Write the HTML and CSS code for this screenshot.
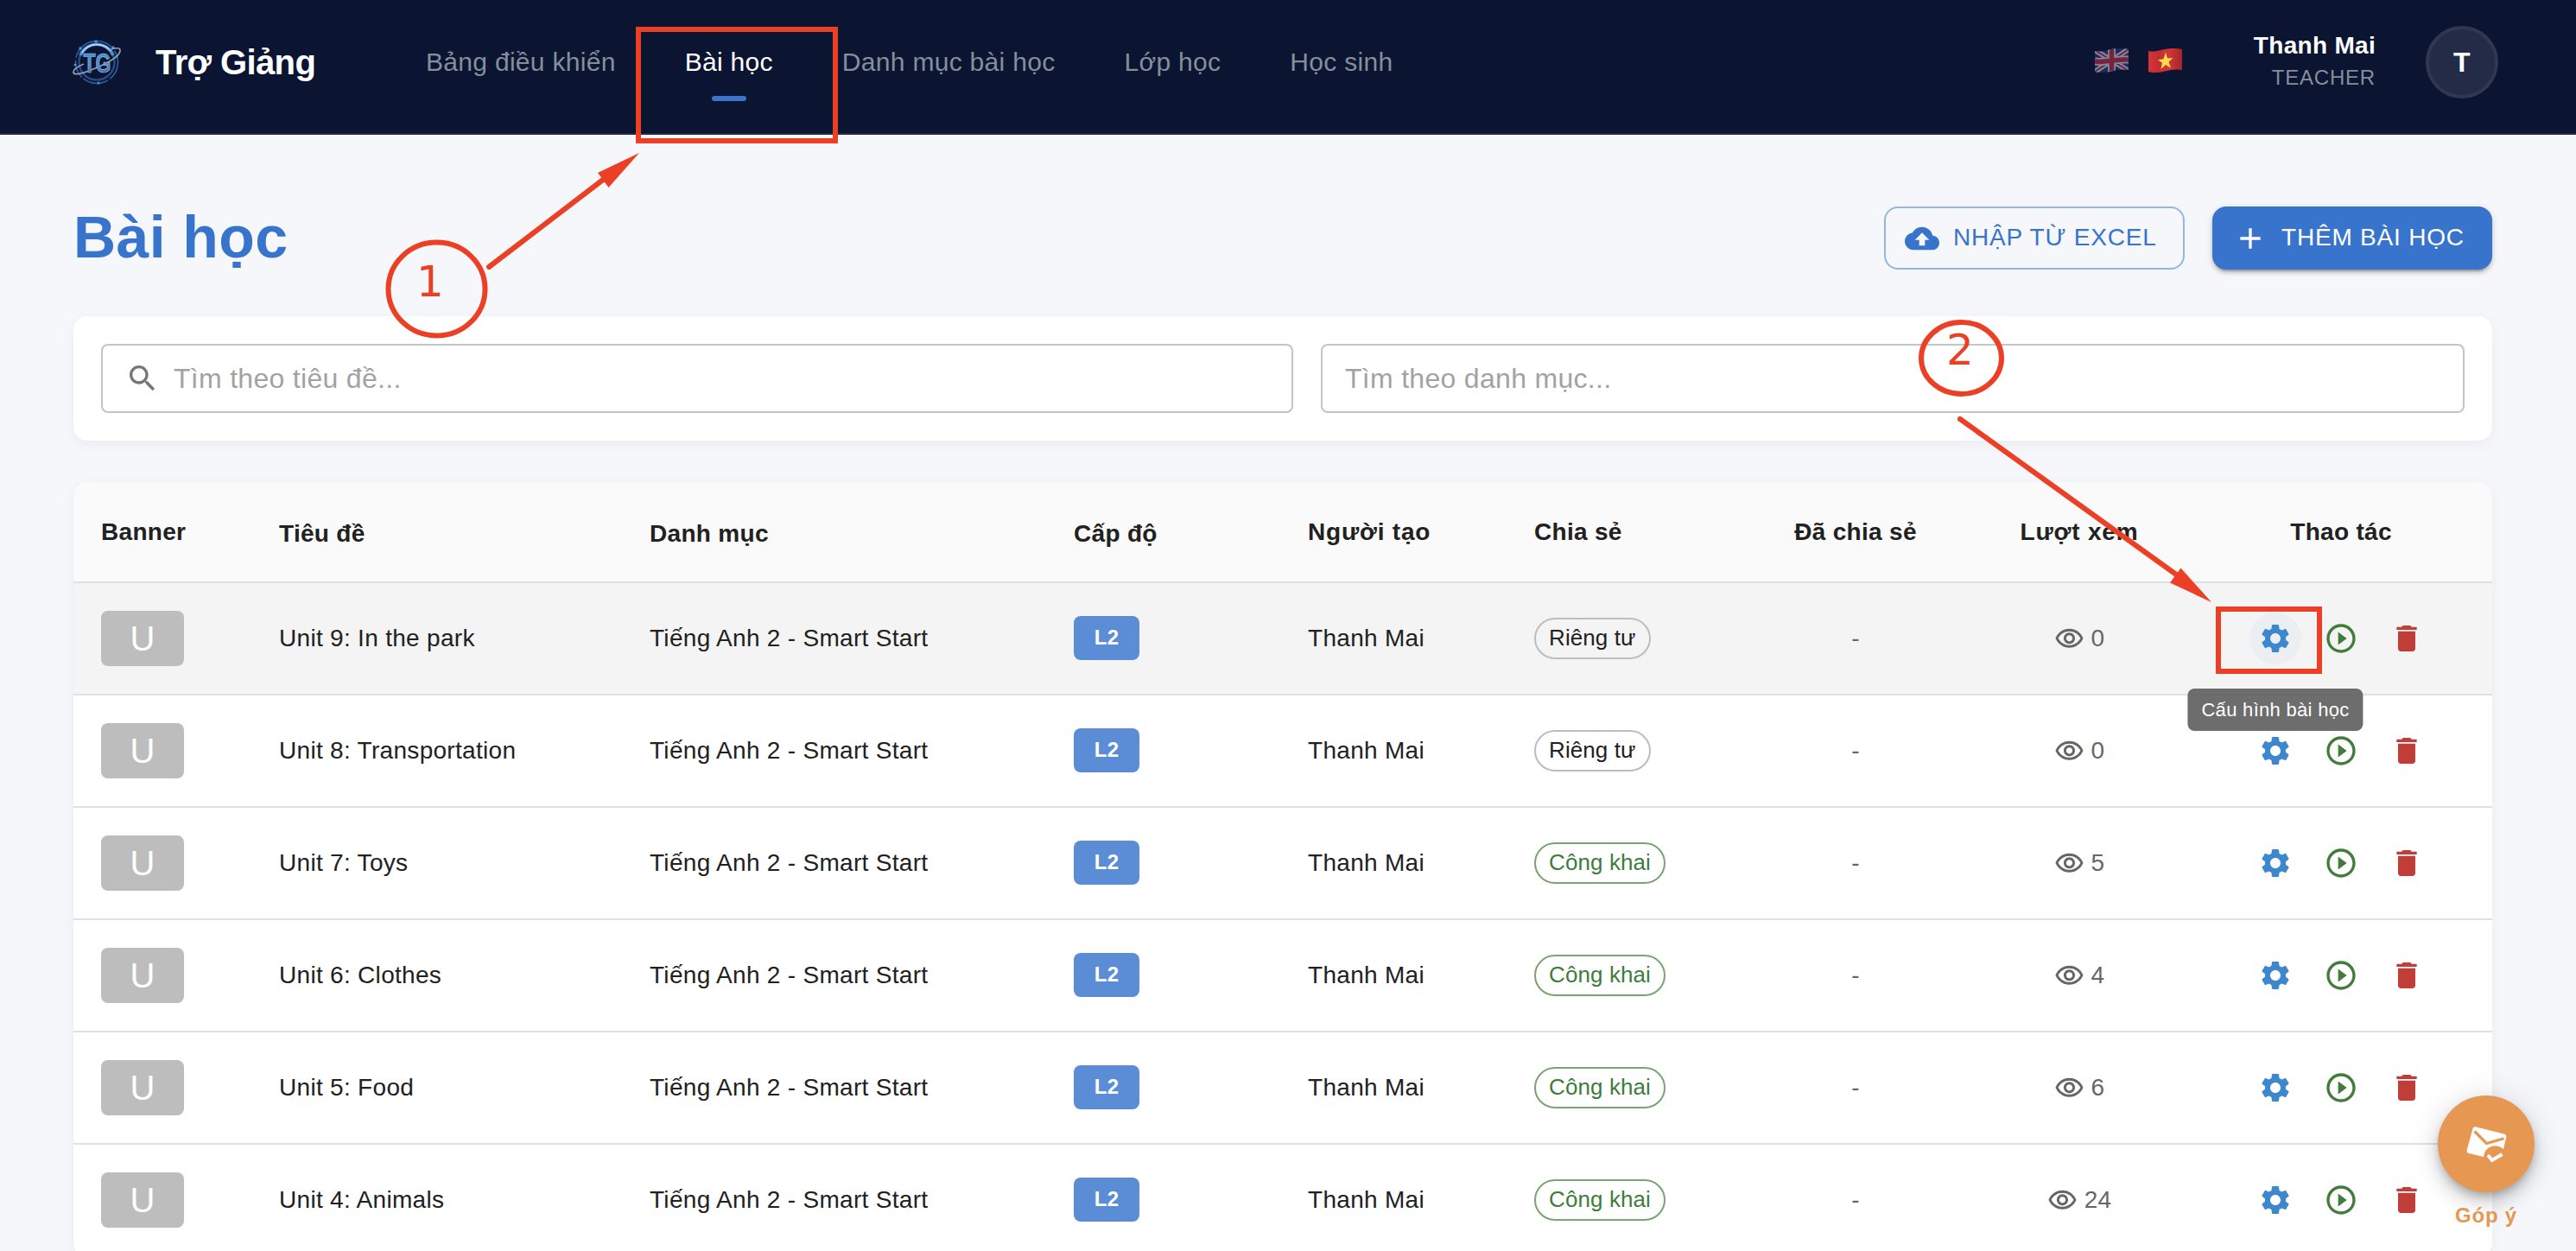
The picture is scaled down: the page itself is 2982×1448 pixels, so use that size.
FILE: index.html
```html
<!DOCTYPE html>
<html lang="vi">
<head>
<meta charset="utf-8">
<title>Trợ Giảng - Bài học</title>
<link rel="stylesheet" href="styles.css">
</head>
<body>
<svg class="defs" width="0" height="0" aria-hidden="true">
  <symbol id="i-gear" viewBox="0 0 24 24"><path d="M19.14 12.94c.04-.3.06-.61.06-.94 0-.32-.02-.64-.07-.94l2.03-1.58c.18-.14.23-.41.12-.61l-1.92-3.32c-.12-.22-.37-.29-.59-.22l-2.39.96c-.5-.38-1.03-.7-1.62-.94l-.36-2.54c-.04-.24-.24-.41-.48-.41h-3.84c-.24 0-.43.17-.47.41l-.36 2.54c-.59.24-1.13.57-1.62.94l-2.39-.96c-.22-.08-.47 0-.59.22L2.74 8.87c-.12.21-.08.47.12.61l2.03 1.58c-.05.3-.09.63-.09.94s.02.64.07.94l-2.03 1.58c-.18.14-.23.41-.12.61l1.92 3.32c.12.22.37.29.59.22l2.39-.96c.5.38 1.03.7 1.62.94l.36 2.54c.05.24.24.41.48.41h3.84c.24 0 .44-.17.47-.41l.36-2.54c.59-.24 1.13-.56 1.62-.94l2.39.96c.22.08.47 0 .59-.22l1.92-3.32c.12-.22.07-.47-.12-.61zM12 15.6c-1.98 0-3.6-1.62-3.6-3.6s1.62-3.6 3.6-3.6 3.6 1.62 3.6 3.6-1.62 3.6-3.6 3.6"/></symbol>
  <symbol id="i-play" viewBox="0 0 24 24"><path d="m10 16.500 6-4.500-6-4.500zM12 2C6.480 2 2 6.480 2 12s4.480 10 10 10 10-4.480 10-10S17.520 2 12 2m0 18c-4.410 0-8-3.590-8-8s3.590-8 8-8 8 3.590 8 8-3.590 8-8 8"/></symbol>
  <symbol id="i-trash" viewBox="0 0 24 24"><path d="M6 19c0 1.100.9 2 2 2h8c1.100 0 2-.9 2-2V7H6zM19 4h-3.500l-1-1h-5l-1 1H5v2h14z"/></symbol>
  <symbol id="i-eye" viewBox="0 0 24 24"><path d="M12 6c3.790 0 7.170 2.130 8.820 5.500C19.170 14.870 15.790 17 12 17s-7.170-2.130-8.820-5.500C4.830 8.130 8.210 6 12 6m0-2C7 4 2.730 7.110 1 11.500 2.730 15.890 7 19 12 19s9.270-3.110 11-7.500C21.270 7.110 17 4 12 4m0 5c1.380 0 2.500 1.120 2.500 2.500S13.380 14 12 14s-2.500-1.120-2.500-2.500S10.620 9 12 9m0-2c-2.480 0-4.500 2.020-4.500 4.500S9.520 16 12 16s4.500-2.020 4.500-4.500S14.480 7 12 7"/></symbol>
</svg>

<header class="topbar">
  <svg class="logo" viewBox="0 0 56 52">
    <defs><linearGradient id="steel" x1="0" y1="0" x2="0" y2="1"><stop offset="0" stop-color="#3f8fdc"/><stop offset=".55" stop-color="#4a8fd6"/><stop offset="1" stop-color="#2a5592"/></linearGradient></defs>
    <circle cx="28" cy="26" r="24.500" fill="none" stroke="#2c5f9c" stroke-width="1.600" stroke-dasharray="22 3 30 2"/>
    <circle cx="28" cy="26" r="20.500" fill="none" stroke="#274a80" stroke-width="2.500"/>
    <path d="M9 18a20.500 20.500 0 0 1 38 0" fill="none" stroke="#4b93da" stroke-width="3.500"/>
    <path d="M11 15a20.500 20.500 0 0 1 33-2" fill="none" stroke="#bcd5ea" stroke-width="1.600"/>
    <g fill="#4b93da"><circle cx="27" cy="2" r="1.800"/><circle cx="9" cy="10" r="1.700"/><circle cx="47" cy="9" r="1.700"/><circle cx="3" cy="29" r="1.500"/><circle cx="30" cy="50" r="1.500"/></g>
    <path d="M42 12c8-3 13-3 13 0 .6 5-9 12-22 18S2 43 1 38c-.4-3 5-7 12-10" fill="none" stroke="#8f9fb4" stroke-width="1.700"/>
    <text x="12.500" y="38" class="logo-text" textLength="32" lengthAdjust="spacingAndGlyphs">TG</text>
  </svg>
  <span class="brand">Trợ Giảng</span>
  <nav class="nav">
    <a>Bảng điều khiển</a><a class="active">Bài học</a><a>Danh mục bài học</a><a>Lớp học</a><a>Học sinh</a>
  </nav>
  <div class="flags">
    <svg class="flag dim" viewBox="0 0 39 28">
      <clipPath id="wave"><path d="M0 3C10 6 20-3 39 1V25C24 22 14 31 0 27Z"/></clipPath>
      <g clip-path="url(#wave)"><path fill="#24408e" d="M0 0h39v28H0z"/><path d="M0 2 39 26M0 27 39 1" stroke="#e8e8f0" stroke-width="6"/><path d="M0 2 39 26M0 27 39 1" stroke="#cf3048" stroke-width="2"/><path d="M19.500 0V28M0 15C12 17 24 12 39 13" fill="none" stroke="#e8e8f0" stroke-width="9"/><path d="M19.500 0V28M0 15C12 17 24 12 39 13" fill="none" stroke="#cf3048" stroke-width="5.500"/></g>
    </svg>
    <svg class="flag" viewBox="0 0 39 28">
      <defs><linearGradient id="red" x1="0" x2="1"><stop offset="0" stop-color="#d6343a"/><stop offset=".3" stop-color="#c22d31"/><stop offset=".6" stop-color="#d2353a"/><stop offset="1" stop-color="#a3262b"/></linearGradient></defs>
      <path fill="url(#red)" d="M0 3C10 6 20-3 39 1V25C24 22 14 31 0 27Z"/>
      <path fill="#f8dc4c" d="m20 4.500 2 7 6.500-.5-5 4.700 2.500 7-6-3.700-5.500 5 1.500-7.300-5-3.500 6.500-.9z"/>
    </svg>
  </div>
  <div class="user"><strong>Thanh Mai</strong><span>TEACHER</span></div>
  <div class="me">T</div>
</header>

<main class="page">
  <div class="title-row">
    <h1>Bài học</h1>
    <button class="btn outlined"><svg viewBox="0 0 24 24"><path d="M19.350 10.040C18.670 6.590 15.640 4 12 4 9.110 4 6.600 5.640 5.350 8.040 2.340 8.360 0 10.910 0 14c0 3.310 2.690 6 6 6h13c2.760 0 5-2.240 5-5 0-2.640-2.050-4.780-4.650-4.960M14 13v4h-4v-4H7l5-5 5 5z"/></svg>NHẬP TỪ EXCEL</button>
    <button class="btn filled"><svg viewBox="0 0 24 24"><path d="M19 13h-6v6h-2v-6H5v-2h6V5h2v6h6z"/></svg>THÊM BÀI HỌC</button>
  </div>

  <section class="filters">
    <label class="field"><svg viewBox="0 0 24 24"><path d="M15.500 14h-.79l-.28-.27C15.410 12.590 16 11.110 16 9.500 16 5.910 13.090 3 9.500 3S3 5.910 3 9.500 5.910 16 9.500 16c1.610 0 3.090-.59 4.230-1.570l.27.28v.79l5 4.990L20.490 19zm-6 0C7.010 14 5 11.990 5 9.500S7.010 5 9.500 5 14 7.010 14 9.500 11.990 14 9.500 14"/></svg><span>Tìm theo tiêu đề...</span></label>
    <label class="field"><span>Tìm theo danh mục...</span></label>
  </section>

  <section class="table">
    <div class="row head">
      <div>Banner</div><div class="sort">Tiêu đề</div><div class="sort">Danh mục</div><div class="sort">Cấp độ</div><div class="wide">Người tạo</div><div>Chia sẻ</div><div class="mid">Đã chia sẻ</div><div class="mid wide">Lượt xem</div><div class="mid">Thao tác</div>
    </div>
    <div class="row hover"><div><span class="thumb">U</span></div><div>Unit 9: In the park</div><div>Tiếng Anh 2 - Smart Start</div><div><span class="level">L2</span></div><div>Thanh Mai</div><div><span class="chip">Riêng tư</span></div><div class="mid muted">-</div><div class="mid muted"><svg class="eye"><use href="#i-eye"/></svg>0</div><div class="acts"><i class="gear on"><svg><use href="#i-gear"/></svg><span class="tip">Cấu hình bài học</span></i><i class="play"><svg><use href="#i-play"/></svg></i><i class="trash"><svg><use href="#i-trash"/></svg></i></div></div>
    <div class="row"><div><span class="thumb">U</span></div><div>Unit 8: Transportation</div><div>Tiếng Anh 2 - Smart Start</div><div><span class="level">L2</span></div><div>Thanh Mai</div><div><span class="chip">Riêng tư</span></div><div class="mid muted">-</div><div class="mid muted"><svg class="eye"><use href="#i-eye"/></svg>0</div><div class="acts"><i class="gear"><svg><use href="#i-gear"/></svg></i><i class="play"><svg><use href="#i-play"/></svg></i><i class="trash"><svg><use href="#i-trash"/></svg></i></div></div>
    <div class="row"><div><span class="thumb">U</span></div><div>Unit 7: Toys</div><div>Tiếng Anh 2 - Smart Start</div><div><span class="level">L2</span></div><div>Thanh Mai</div><div><span class="chip open">Công khai</span></div><div class="mid muted">-</div><div class="mid muted"><svg class="eye"><use href="#i-eye"/></svg>5</div><div class="acts"><i class="gear"><svg><use href="#i-gear"/></svg></i><i class="play"><svg><use href="#i-play"/></svg></i><i class="trash"><svg><use href="#i-trash"/></svg></i></div></div>
    <div class="row"><div><span class="thumb">U</span></div><div>Unit 6: Clothes</div><div>Tiếng Anh 2 - Smart Start</div><div><span class="level">L2</span></div><div>Thanh Mai</div><div><span class="chip open">Công khai</span></div><div class="mid muted">-</div><div class="mid muted"><svg class="eye"><use href="#i-eye"/></svg>4</div><div class="acts"><i class="gear"><svg><use href="#i-gear"/></svg></i><i class="play"><svg><use href="#i-play"/></svg></i><i class="trash"><svg><use href="#i-trash"/></svg></i></div></div>
    <div class="row"><div><span class="thumb">U</span></div><div>Unit 5: Food</div><div>Tiếng Anh 2 - Smart Start</div><div><span class="level">L2</span></div><div>Thanh Mai</div><div><span class="chip open">Công khai</span></div><div class="mid muted">-</div><div class="mid muted"><svg class="eye"><use href="#i-eye"/></svg>6</div><div class="acts"><i class="gear"><svg><use href="#i-gear"/></svg></i><i class="play"><svg><use href="#i-play"/></svg></i><i class="trash"><svg><use href="#i-trash"/></svg></i></div></div>
    <div class="row"><div><span class="thumb">U</span></div><div>Unit 4: Animals</div><div>Tiếng Anh 2 - Smart Start</div><div><span class="level">L2</span></div><div>Thanh Mai</div><div><span class="chip open">Công khai</span></div><div class="mid muted">-</div><div class="mid muted"><svg class="eye"><use href="#i-eye"/></svg>24</div><div class="acts"><i class="gear"><svg><use href="#i-gear"/></svg></i><i class="play"><svg><use href="#i-play"/></svg></i><i class="trash"><svg><use href="#i-trash"/></svg></i></div></div>
  </section>
</main>

<div class="feedback">
  <div class="fab">
    <svg viewBox="-2 -1 80 70">
      <path d="M26 14.300 58.500 22.600Q62 23.500 61.200 27L56 48 47 52 17.500 44.800Q15 44 15.700 41L22.500 16.500Q23.300 13.700 26 14.300Z" fill="#fff"/>
      <path d="M24.500 19.500 38.500 33.500 58.500 27.800" fill="none" stroke="#e69853" stroke-width="3.200"/>
      <circle cx="48.500" cy="49.500" r="13.300" fill="#e69853"/>
      <path d="M40 47 44.800 53 56.500 46" fill="none" stroke="#fff" stroke-width="4"/>
    </svg>
  </div>
  <span>Góp ý</span>
</div>

<svg class="marks" viewBox="0 0 2982 1448">
  <g fill="none" stroke="#eb4025" stroke-width="6">
    <rect x="739" y="34" width="228" height="129"/>
    <ellipse cx="505.500" cy="334.500" rx="56" ry="54"/>
    <path d="M566 309 702 205" stroke-linecap="round"/>
    <rect x="2568" y="705" width="117" height="72"/>
    <ellipse cx="2270.500" cy="414.500" rx="46.500" ry="41.500"/>
    <path d="M2269 485 2522 667" stroke-linecap="round"/>
  </g>
  <g fill="#eb4025">
    <path d="M740 177 692 200 704.500 217ZM2560 697 2524.500 657.500 2512 674.500Z"/>
    <text x="482" y="343">1</text><text x="2253" y="422">2</text>
  </g>
</svg>
</body>
</html>
```
FILE: styles.css
```css
* { box-sizing: border-box; }
body { margin: 0; height: 1448px; overflow: hidden; position: relative; background: #f5f7fb; color: #212121; font: 28px "Liberation Sans", Arial, sans-serif; letter-spacing: .3px; }
svg { display: block; flex: none; fill: currentColor; }
.defs { position: absolute; }

.topbar { height: 156px; padding: 0 90px 10px 84px; display: flex; align-items: center; background: #0b1431; border-bottom: 2px solid #242b48; color: #fff; }
.logo { width: 56px; height: 52px; }
.logo-text { font: bold 31px "Liberation Sans", Arial, sans-serif; fill: url(#steel); stroke: #a9bfd6; stroke-width: .7; letter-spacing: 0; }
.brand { width: 313px; margin-left: 40px; font-size: 40px; font-weight: 700; letter-spacing: -.6px; }
.nav { display: flex; gap: 80px; font-size: 30px; color: #848f9b; white-space: nowrap; }
.nav a { line-height: 90px; position: relative; }
.nav .active { color: #fff; }
.nav .active::after { content: ""; position: absolute; left: 50%; margin-left: -20px; bottom: 0; width: 40px; height: 6px; border-radius: 3px; background: #3874cb; }
.flags { display: flex; gap: 23px; margin: 0 83px 4px auto; }
.flag { width: 39px; height: 28px; }
.dim { opacity: .55; }
.user { display: flex; flex-direction: column; align-items: flex-end; margin: 0 58px 2px 0; }
.user strong { line-height: 38px; }
.user span { font-size: 24px; line-height: 36px; color: #848f9b; letter-spacing: .8px; }
.me { width: 84px; height: 84px; border: 4px solid #313751; border-radius: 50%; background: #242b46; display: grid; place-items: center; font-size: 32px; font-weight: 700; }

.page { padding: 83px 97px 0 85px; }
.title-row { display: flex; align-items: center; height: 73px; gap: 32px; }
h1 { margin: 0 auto 0 0; padding-bottom: 4px; font-size: 68px; line-height: 72px; color: #3874cb; letter-spacing: .4px; }
.btn { height: 73px; border: 0; border-radius: 16px; display: flex; align-items: center; font: 28px "Liberation Sans", Arial, sans-serif; letter-spacing: .8px; padding: 0 0 2px; white-space: nowrap; }
.btn svg { width: 40px; height: 40px; position: relative; top: 1px; }
.outlined { width: 348px; padding-left: 22px; gap: 16px; border: 2px solid #95b5e5; background: none; color: #3874cb; }
.filled { width: 324px; padding-left: 24px; gap: 16px; background: #3874cb; color: #fff; box-shadow: 0 6px 2px -4px rgba(0,0,0,.2), 0 4px 4px rgba(0,0,0,.14), 0 2px 10px rgba(0,0,0,.12); }

.filters { margin-top: 54px; height: 144px; padding: 32px; border-radius: 16px; background: #fff; box-shadow: 0 4px 16px rgba(0,0,0,.05); display: grid; grid-template-columns: 1380px 1324px; gap: 32px; }
.field { display: flex; align-items: center; gap: 16px; padding: 0 26px; border: 2px solid #c4c4c4; border-radius: 8px; font-size: 32px; color: #a2a2a2; }
.field svg { width: 40px; height: 40px; color: #757575; }

.table { margin-top: 48px; border-radius: 16px; background: #fff; box-shadow: 0 4px 16px rgba(0,0,0,.05); }
.row { display: grid; grid-template-columns: 206px 429px 491px 271px 262px 273px 262px 256px 350px; height: 130px; border-bottom: 2px solid #e0e0e0; }
.row > div { padding: 0 32px; display: flex; align-items: center; white-space: nowrap; }
.head { height: 117px; background: #fafafa; font-weight: 700; border-radius: 16px 16px 0 0; }
.head > .sort { padding-top: 4px; }
.head > .wide { letter-spacing: .8px; }
.hover { background: #f4f4f4; }
.row > .mid { justify-content: center; }
.muted { color: #666; }
.thumb { width: 96px; height: 64px; border-radius: 8px; background: #bdbdbd; color: #fff; font-size: 40px; display: grid; place-items: center; }
.level { width: 76px; height: 51px; margin-bottom: 1px; padding-bottom: 1px; border-radius: 8px; background: #5b8dd6; color: #fff; font-size: 24px; font-weight: 700; display: grid; place-items: center; }
.chip { height: 48px; padding: 0 15px 2px; border: 2px solid #bdbdbd; border-radius: 24px; font-size: 26px; letter-spacing: .1px; display: flex; align-items: center; }
.open { color: #3c7d3c; border-color: #7aa572; }
.eye { width: 35px; height: 35px; margin-right: 8px; }
.row > .acts { justify-content: center; gap: 16px; }
.acts i { width: 60px; height: 60px; padding: 10px; border-radius: 50%; font-style: normal; position: relative; }
.acts svg { width: 40px; height: 40px; }
.gear { color: #3c87cd; }
.on { background: #ebeff2; }
.play { color: #427c3a; }
.trash { color: #c13e38; }
.tip { position: absolute; z-index: 2; left: 50%; top: 88px; transform: translateX(-50%); height: 49px; padding: 0 16px; border-radius: 8px; background: rgba(97,97,97,.92); color: #fff; font-size: 22px; line-height: 49px; }

.feedback { position: absolute; left: 2822px; top: 1268px; width: 112px; display: flex; flex-direction: column; align-items: center; color: #e69853; font-size: 24px; font-weight: 700; letter-spacing: .8px; }
.fab { width: 112px; height: 112px; border-radius: 50%; background: #e69853; display: grid; place-items: center; box-shadow: 0 6px 10px -2px rgba(0,0,0,.2), 0 12px 20px rgba(0,0,0,.14), 0 2px 36px rgba(0,0,0,.12); }
.fab svg { width: 80px; height: 70px; }
.feedback span { margin-top: 13px; }

.marks { position: absolute; left: 0; top: 0; width: 2982px; height: 1448px; pointer-events: none; }
.marks text { font: 50px "DejaVu Sans", Verdana, sans-serif; letter-spacing: 0; }
```
